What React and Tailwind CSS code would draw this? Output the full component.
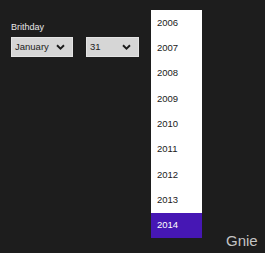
const years = [2006, 2007, 2008, 2009, 2010, 2011, 2012, 2013, 2014];

function Chevron() {
  return (
    <svg width="9" height="6" viewBox="0 0 9 6" className="shrink-0">
      <path d="M1 1.2 L4.5 4.6 L8 1.2" fill="none" stroke="#1a1a1a" strokeWidth="1.9" />
    </svg>
  );
}

function SelectBox({ value, width }) {
  return (
    <div
      className={`flex h-[20px] items-center justify-between border border-[#e4e4e4] bg-[#d6d6d6] pl-[3px] pr-[7px] text-[9.5px] text-[#1c1c1c] ${width}`}
    >
      <span>{value}</span>
      <Chevron />
    </div>
  );
}

export default function App() {
  return (
    <div
      className="relative h-[253px] w-[265px] overflow-hidden bg-[#1d1d1d]"
      style={{ fontFamily: '"Liberation Sans", Arial, sans-serif' }}
    >
      <div className="pl-[11px] pt-[21px]">
        <div className="mb-[4px] text-[9px] leading-[12px] text-[#e8e8e8]">Brithday</div>
        <div className="flex gap-[13px]">
          <SelectBox value="January" width="w-[62px]" />
          <SelectBox value="31" width="w-[53px]" />
        </div>
      </div>

      <ul className="absolute left-[151px] top-[10px] w-[51px] bg-white">
        {years.map((y) => (
          <li
            key={y}
            className={`flex h-[25.33px] items-center pl-[6px] text-[9.5px] ${
              y === 2014 ? 'bg-[#4617b4] text-white' : 'text-[#1a1a1a]'
            }`}
          >
            {y}
          </li>
        ))}
      </ul>

      <div className="absolute left-[226px] top-[233px] text-[15px] leading-none text-[#c4c4c4]">
        Gnie
      </div>
    </div>
  );
}
